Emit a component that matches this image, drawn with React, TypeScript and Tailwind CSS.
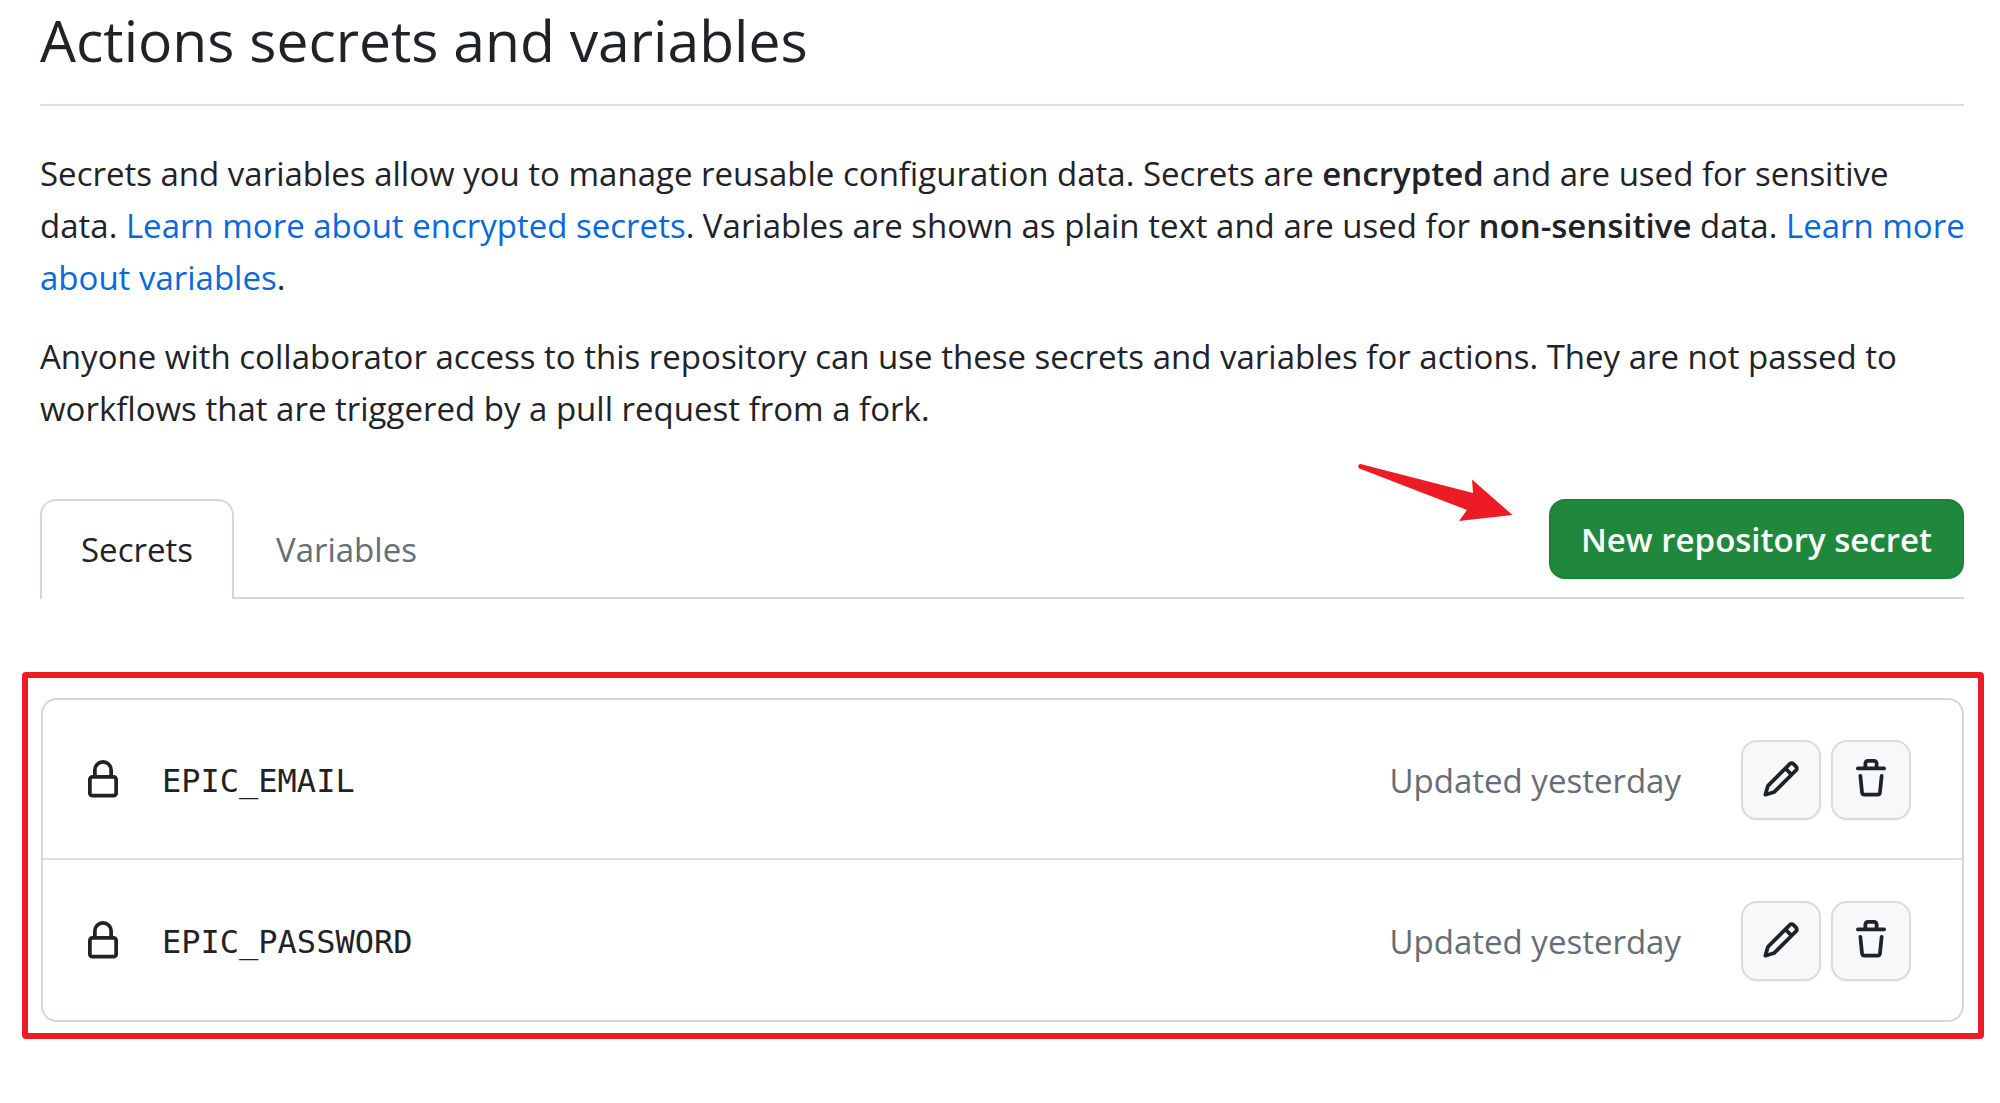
const LOCK =
  'M4 4a4 4 0 0 1 8 0v2h.25c.966 0 1.75.784 1.75 1.75v5.5A1.75 1.75 0 0 1 12.25 15h-8.5A1.75 1.75 0 0 1 2 13.25v-5.5C2 6.784 2.784 6 3.75 6H4Zm8.25 3.5h-8.5a.25.25 0 0 0-.25.25v5.5c0 .138.112.25.25.25h8.5a.25.25 0 0 0 .25-.25v-5.5a.25.25 0 0 0-.25-.25ZM10.5 6V4a2.5 2.5 0 1 0-5 0v2Z';
const PENCIL =
  'M11.013 1.427a1.75 1.75 0 0 1 2.474 0l1.086 1.086a1.75 1.75 0 0 1 0 2.474l-8.61 8.61c-.21.21-.47.364-.756.445l-3.251.93a.75.75 0 0 1-.927-.928l.929-3.25c.081-.286.235-.547.445-.758l8.61-8.61Zm.176 4.823L9.75 4.81l-6.286 6.287a.253.253 0 0 0-.064.108l-.558 1.953 1.953-.558a.253.253 0 0 0 .108-.064Zm1.238-3.763a.25.25 0 0 0-.354 0L10.811 3.75l1.439 1.44 1.263-1.263a.25.25 0 0 0 0-.354Z';
const TRASH =
  'M11 1.75V3h2.25a.75.75 0 0 1 0 1.5H2.75a.75.75 0 0 1 0-1.5H5V1.75C5 .784 5.784 0 6.75 0h2.5C10.216 0 11 .784 11 1.75ZM4.496 6.675l.66 6.6a.25.25 0 0 0 .249.225h5.19a.25.25 0 0 0 .249-.225l.66-6.6a.75.75 0 0 1 1.492.149l-.66 6.6A1.748 1.748 0 0 1 10.595 15h-5.19a1.75 1.75 0 0 1-1.741-1.575l-.66-6.6a.75.75 0 1 1 1.492-.15ZM6.5 1.75V3h3V1.75a.25.25 0 0 0-.25-.25h-2.5a.25.25 0 0 0-.25.25Z';

const secrets = ['EPIC_EMAIL', 'EPIC_PASSWORD'];

function Icon({ path }: { path: string }) {
  return (
    <svg viewBox="0 0 16 16" className="size-10 shrink-0" fill="currentColor" aria-hidden="true">
      <path d={path} />
    </svg>
  );
}

function IconButton({ label, path }: { label: string; path: string }) {
  return (
    <button
      type="button"
      aria-label={label}
      className="flex size-20 items-center justify-center rounded-2xl border-2 border-[#d8dbdf] bg-[#f6f8fa] pb-[2px] shadow-xs"
    >
      <Icon path={path} />
    </button>
  );
}

function SecretRow({ name }: { name: string }) {
  return (
    <li className="flex h-40 items-center pt-[2px] pr-[51px] pl-10">
      <Icon path={LOCK} />
      <span className="ml-[39px] pt-[2px] font-['DejaVu_Sans_Mono',monospace] text-[32px]">{name}</span>
      <span className="mr-[60px] ml-auto pt-[2px] text-[#656d76]">Updated yesterday</span>
      <div className="flex gap-[10px]">
        <IconButton label={`Edit ${name}`} path={PENCIL} />
        <IconButton label={`Delete ${name}`} path={TRASH} />
      </div>
    </li>
  );
}

export default function App() {
  return (
    <main className="min-h-screen bg-white px-[22px] font-['Open_Sans',sans-serif] text-[33px] leading-[52px] text-[#1f2328]">
      <div className="pr-[14px] pl-[18px]">
        <h1 className="border-b-2 border-[#d8dee4] pb-6 text-[57px] leading-[80px]">
          Actions secrets and variables
        </h1>
        <p className="mt-[42px] -mr-1">
          Secrets and variables allow you to manage reusable configuration data. Secrets are{' '}
          <strong className="font-semibold">encrypted</strong> and are used for sensitive data.{' '}
          <a href="#encrypted-secrets" className="text-[#0969da]">Learn more about encrypted secrets</a>. Variables
          are shown as plain text and are used for <strong className="font-semibold">non-sensitive</strong> data.{' '}
          <a href="#about-variables" className="text-[#0969da]">Learn more about variables</a>.
        </p>
        <p className="mt-[27px]">
          Anyone with collaborator access to this repository can use these secrets and variables for actions. They
          are not passed to workflows that are triggered by a pull request from a fork.
        </p>
        <div className="mt-[64px] flex items-start justify-between border-b-2 border-[#d0d7de]">
          <div role="tablist" className="-mb-[2px] flex">
            <button
              type="button"
              role="tab"
              aria-selected="true"
              className="rounded-t-2xl border-2 border-b-0 border-[#d0d7de] bg-white px-[39px] py-[23px]"
            >
              Secrets
            </button>
            <button type="button" role="tab" aria-selected="false" className="px-[42px] pt-6 pb-[22px] text-[#656d76]">
              Variables
            </button>
          </div>
          <div className="relative">
            <svg
              viewBox="0 0 160 64"
              className="absolute -top-[36px] right-full mr-[34px] h-16 w-40"
              fill="#ed1c24"
              aria-hidden="true"
            >
              <path d="M5.500 1 L118 30 L117 16.500 L157.500 52 L104 58 L112 47 L4.500 5.500 A2.400 2.400 0 0 1 5.500 1Z" />
            </svg>
            <button
              type="button"
              className="h-20 rounded-2xl border-2 border-[#1f7f3a] bg-[#1f883d] px-[30px] pt-[2px] font-semibold text-white shadow-xs"
            >
              New repository secret
            </button>
          </div>
        </div>
      </div>
      <section
        aria-label="Repository secrets"
        className="mt-[73px] -mr-[6px] rounded-sm border-[6px] border-[#ed1c24] pt-5 pr-[14px] pb-[11px] pl-[13px]"
      >
        <ul className="divide-y-2 divide-[#d8dee4] rounded-2xl border-2 border-[#d0d7de]">
          {secrets.map((name) => (
            <SecretRow key={name} name={name} />
          ))}
        </ul>
      </section>
    </main>
  );
}
